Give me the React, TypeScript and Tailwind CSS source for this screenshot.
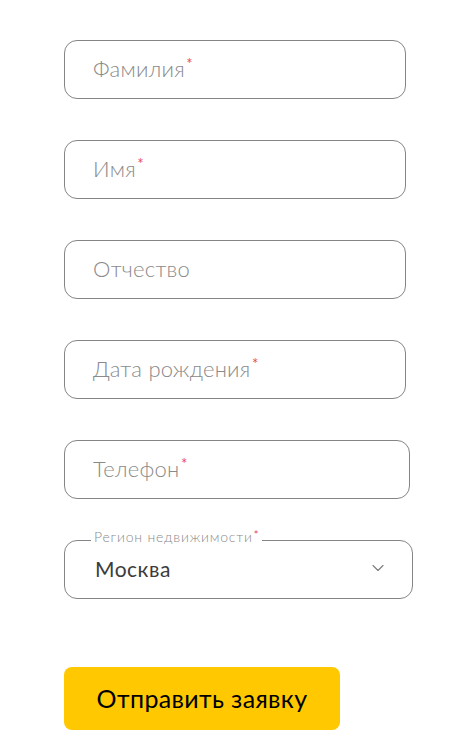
import { ChevronDown } from "lucide-react";

const font = { fontFamily: '"Lato", "Open Sans", "Liberation Sans", sans-serif' };

type FieldProps = {
  label: string;
  required?: boolean;
  width: string;
};

function TextField({ label, required, width }: FieldProps) {
  return (
    <label
      className={`flex h-[59px] items-center rounded-[13px] border border-[#858585] bg-white pb-[2px] pl-[28px] ${width}`}
    >
      <span className="relative text-[22px] font-light leading-none tracking-[0.25px] text-[#8a8a8a]">
        {label}
        {required && (
          <span className="absolute -right-[8px] -top-[2px] text-[15px] font-normal text-[#e8475a]">*</span>
        )}
      </span>
    </label>
  );
}

export default function App() {
  return (
    <div className="min-h-[754px] w-[473px] bg-white" style={font}>
      <form className="flex flex-col pl-[64px] pt-[40px]">
        <div className="flex flex-col gap-[41px]">
          <TextField label="Фамилия" required width="w-[342px]" />
          <TextField label="Имя" required width="w-[342px]" />
          <TextField label="Отчество" width="w-[342px]" />
          <TextField label="Дата рождения" required width="w-[342px]" />
          <TextField label="Телефон" required width="w-[346px]" />

          <div className="relative flex h-[59px] w-[349px] items-center justify-between rounded-[13px] border border-[#858585] bg-white pb-[3px] pl-[30px] pr-[24px]">
            <span className="absolute left-[26px] top-[-12px] bg-white px-[3px] text-[14px] font-light leading-[16px] tracking-[0.8px] text-[#8a8a8a]">
              Регион недвижимости
              <span className="relative -top-[3px] ml-[1px] text-[11px] font-normal text-[#e8475a]">*</span>
            </span>
            <span className="text-[21px] leading-none tracking-[0.5px] text-[#3c3c3c]">Москва</span>
            <ChevronDown size={20} strokeWidth={1.3} className="text-[#7a7a7a]" />
          </div>
        </div>

        <button
          type="button"
          className="mt-[68px] flex h-[63px] w-[276px] items-center justify-center rounded-[8px] bg-[#ffc800] text-[25px] tracking-[0.35px] text-black"
        >
          Отправить заявку
        </button>
      </form>
    </div>
  );
}
